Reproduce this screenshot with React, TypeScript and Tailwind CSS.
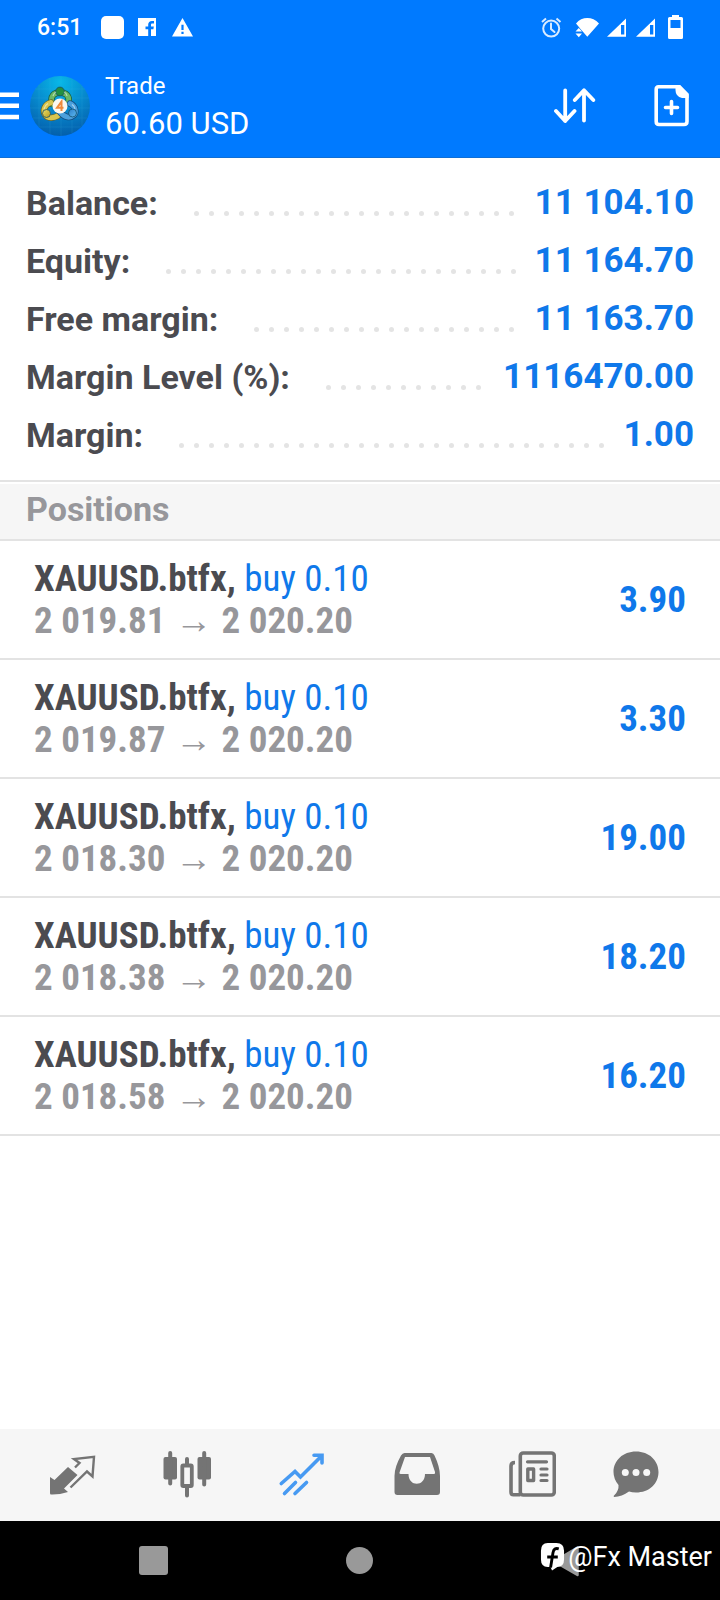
import type { ReactNode } from "react";

type Summary = { label: string; value: string };
type Position = { id: number; symbol: string; volume: string; open: string; current: string; profit: string };

const summary: Summary[] = [
  { label: "Balance:", value: "11 104.10" },
  { label: "Equity:", value: "11 164.70" },
  { label: "Free margin:", value: "11 163.70" },
  { label: "Margin Level (%):", value: "1116470.00" },
  { label: "Margin:", value: "1.00" },
];

const positions: Position[] = [
  { id: 1, symbol: "XAUUSD.btfx,", volume: "buy 0.10", open: "2 019.81", current: "2 020.20", profit: "3.90" },
  { id: 2, symbol: "XAUUSD.btfx,", volume: "buy 0.10", open: "2 019.87", current: "2 020.20", profit: "3.30" },
  { id: 3, symbol: "XAUUSD.btfx,", volume: "buy 0.10", open: "2 018.30", current: "2 020.20", profit: "19.00" },
  { id: 4, symbol: "XAUUSD.btfx,", volume: "buy 0.10", open: "2 018.38", current: "2 020.20", profit: "18.20" },
  { id: 5, symbol: "XAUUSD.btfx,", volume: "buy 0.10", open: "2 018.58", current: "2 020.20", profit: "16.20" },
];

function StatusBar() {
  return (
    <div className="flex h-[54px] items-center justify-between pl-[37px] pr-[36px]">
      <div className="flex items-center">
        <span className="w-16 pt-px text-[23px] font-medium leading-6">6:51</span>
        <span className="h-[23px] w-[23px] rounded-[5px] bg-white" />
        <svg className="ml-[14px] h-[18px] w-[18px]" viewBox="0 0 18 18" aria-hidden="true">
          <path fillRule="evenodd" fill="#fff" d="M0 0H18V18H13V11.3H15.4L15.8 8.6H13V7C13 6.1 13.4 5.6 14.4 5.6H16V3.1C15.5 3 14.8 2.9 14 2.9C11.600 2.900 10.200 4.300 10.200 6.600V8.600H7.500V11.300H10.200V18H0Z" />
        </svg>
        <svg className="ml-4 h-[19px] w-[21px]" viewBox="0 0 21 19" aria-hidden="true">
          <path fillRule="evenodd" fill="#fff" d="M10.500 0L21 18.500H0ZM9.400 6.700V12H11.600V6.700ZM9.400 13.800V16.100H11.600V13.800Z" />
        </svg>
      </div>
      <svg className="h-[26px] w-[144px]" viewBox="540 13 144 26" fill="#fff" aria-hidden="true">
        <g fill="none" stroke="#fff" strokeWidth="2" opacity="0.85">
          <circle cx="551.200" cy="27.600" r="8" />
          <path d="M551 22.500V28L554.500 31" strokeLinecap="round" />
          <path d="M542 21L546 17.500M556.500 17.500L560.500 21" />
        </g>
        <path d="M576 22.500C582 15.200 592.500 15.200 599 22.500L587.300 35.800L580.500 28L578.500 25.500Z" />
        <path d="M575.500 30.500L578.800 27L582 30.500ZM575.500 32.500H582L578.800 36.300Z" />
        <path fillRule="evenodd" d="M607 35.700L626 17.500V35.700ZM621 24V33.500H624.300V24Z" />
        <path fillRule="evenodd" d="M636 35.700L655 17.500V35.700ZM650 24V33.500H653.300V24Z" />
        <path fillRule="evenodd" d="M672 14H679V16H681.500Q683 16 683 17.500V36.500Q683 38 681.500 38H669.500Q668 38 668 36.500V17.500Q668 16 669.500 16H672ZM670.500 19V27H680.500V19Z" />
      </svg>
    </div>
  );
}

function AppLogo() {
  return (
    <svg className="h-[60px] w-[60px]" viewBox="0 0 60 60" aria-hidden="true">
      <defs>
        <radialGradient id="bg" cx="0.5" cy="0.1" r="0.95">
          <stop offset="0" stopColor="#08b8e8" />
          <stop offset="0.5" stopColor="#0788cc" />
          <stop offset="1" stopColor="#035aa8" />
        </radialGradient>
        <linearGradient id="green" x2="0" y2="1">
          <stop offset="0" stopColor="#2d9440" />
          <stop offset="1" stopColor="#8cc97a" />
        </linearGradient>
        <linearGradient id="yellow" x2="1" y2="1">
          <stop offset="0" stopColor="#e9df6a" />
          <stop offset="1" stopColor="#b99a1c" />
        </linearGradient>
        <linearGradient id="blue" x2="1" y2="1">
          <stop offset="0" stopColor="#2b7fca" />
          <stop offset="1" stopColor="#5eb8f0" />
        </linearGradient>
      </defs>
      <circle cx="30" cy="30" r="30" fill="url(#bg)" />
      <path d="M9 9V51M20 2V58M31 0V60M42 3V57M52 10V50M5 13H55M1 22H59M0 32H60M3 42H57M9 51H51" stroke="#45b8e4" strokeWidth="0.600" opacity="0.250" />
      <g fill="none" strokeLinecap="round">
        <path d="M22 28C20 20 24 16.500 30 16.500S40 20 38.500 27" stroke="#175c3a" strokeWidth="6.400" />
        <path d="M22 28C20 20 24 16.500 30 16.500S40 20 38.500 27" stroke="#6cb865" strokeWidth="5" />
        <path d="M21 26.500C15 28 12.500 34 15 38.500C18 43 24 42 27.500 40" stroke="#6d6420" strokeWidth="6.400" />
        <path d="M21 26.500C15 28 12.500 34 15 38.500C18 43 24 42 27.500 40" stroke="#d8c650" strokeWidth="5" />
        <path d="M40 27.500C45.500 30 46.500 36 44 39C39.500 43 34 41 30 36" stroke="#124c82" strokeWidth="6.400" />
        <path d="M40 27.500C45.500 30 46.500 36 44 39C39.500 43 34 41 30 36" stroke="#4ba0dc" strokeWidth="5" />
      </g>
      <g stroke="#15506a" strokeWidth="0.800">
        <circle cx="30" cy="15.500" r="4.400" fill="#249040" />
        <circle cx="16.500" cy="37.500" r="4" fill="url(#yellow)" />
        <circle cx="42.500" cy="37" r="4" fill="url(#blue)" />
      </g>
      <path d="M23 20Q24 17 26 16M34 16Q36.500 17 37 20M14 33Q15 29 18 27.500M45 33Q44.500 30 42 28.500" stroke="#fff" strokeWidth="1.200" fill="none" opacity="0.500" />
      <circle cx="30" cy="30" r="7.500" fill="#fbf8f0" />
      <path d="M31.500 35V25.500L27 31.800H33.500" fill="none" stroke="#f08a3c" strokeWidth="2" />
    </svg>
  );
}

function Header() {
  return (
    <header className="bg-[#007aff] text-white">
      <StatusBar />
      <div className="flex h-[103px] items-center pr-[28px]">
        <button aria-label="Open menu" className="w-[19px]">
          <svg className="mt-px h-[28px] w-[19px]" viewBox="0 0 19 28" fill="#fff" aria-hidden="true">
            <path d="M0 0.500H19V5H0ZM0 11.500H19V16H0ZM0 22.800H19V27.300H0Z" />
          </svg>
        </button>
        <span className="ml-[11px]"><AppLogo /></span>
        <div className="ml-[15px] flex-1">
          <h1 className="text-[24px] leading-[36px]">Trade</h1>
          <p className="text-[31px] leading-[40px]">60.60 USD</p>
        </div>
        <button aria-label="Sort positions">
          <svg className="h-[36px] w-[44px]" viewBox="552 88 44 36" fill="none" stroke="#fff" strokeWidth="3.800" strokeLinecap="round" strokeLinejoin="round" aria-hidden="true">
            <path d="M565.200 90.500V121M556 111L565.200 121L574.500 111M584 120.500V90.500M574.800 100L584 90.200L593.300 100" />
          </svg>
        </button>
        <button aria-label="New order" className="ml-[56px]">
          <svg className="h-[44px] w-[40px]" viewBox="652 84 40 44" fill="none" aria-hidden="true">
            <path d="M658.500 86.700H679.500L687 94.500V121.500Q687 124.500 684 124.500H659Q656.200 124.500 656.200 121.500V89.500Q656.200 86.700 658.500 86.700Z" stroke="#fff" strokeWidth="3.600" />
            <path d="M675.500 86H680L688.500 94.500V98H682Q675.500 96.500 675.500 90Z" fill="#fff" />
            <path d="M671.500 101.500V113.500M665.500 107.500H677.500" stroke="#fff" strokeWidth="3.600" strokeLinecap="round" />
          </svg>
        </button>
      </div>
      <div className="h-px bg-[#0f6fd6]" />
    </header>
  );
}

function Leader() {
  return (
    <span aria-hidden="true" className="ml-[31px] mr-[8px] mt-[20px] flex h-[5px] flex-1 flex-wrap overflow-hidden">
      {Array.from({ length: 48 }, (_, i) => (
        <span key={i} className="flex h-[6px] w-[15px] justify-center">
          <span className="h-[5px] w-[5px] rounded-full bg-[#e4e4e4]" />
        </span>
      ))}
    </span>
  );
}

function TabButton({ label, className, children }: { label: string; className: string; children: ReactNode }) {
  return (
    <button aria-label={label} className={`flex items-center justify-center ${className}`}>
      {children}
    </button>
  );
}

function TabBar() {
  return (
    <nav className="flex h-[92px] bg-[#f6f6f6] pl-[14px] pr-[38px] text-[#747474]">
      <TabButton label="Quotes" className="flex-[115]">
        <svg className="h-12 w-12" viewBox="48 1451 48 48" aria-hidden="true">
          <path d="M50 1477L54.500 1480L68 1467L77.500 1475L64 1488.500L68 1492Q59 1494.800 51 1494.500Q50 1494.500 50 1493Z" fill="currentColor" />
          <path d="M70.500 1487.500L87 1471.500L92.500 1476.500L94 1456.800L74 1459L79.500 1463L75 1467.500" fill="none" stroke="currentColor" strokeWidth="2.400" />
        </svg>
      </TabButton>
      <TabButton label="Charts" className="flex-[115]">
        <svg className="h-12 w-12" viewBox="163.500 1451 48 48" fill="currentColor" aria-hidden="true">
          <rect x="164" y="1457" width="13.500" height="22.500" rx="2" />
          <rect x="198" y="1457" width="13.500" height="22.500" rx="2" />
          <path d="M170.700 1453V1483.500M204.700 1453V1484.500M187.500 1459V1465M187.500 1488V1495.500" stroke="currentColor" strokeWidth="4" strokeLinecap="round" />
          <rect x="182.800" y="1465.500" width="9.500" height="20.500" rx="1" fill="none" stroke="currentColor" strokeWidth="3.800" />
        </svg>
      </TabButton>
      <TabButton label="Trade" className="flex-[115] text-[#479af2]">
        <svg className="h-12 w-12" viewBox="278.500 1451 48 48" fill="none" stroke="currentColor" strokeWidth="3.600" strokeLinecap="round" aria-hidden="true">
          <path d="M281.800 1483.500L295.500 1471.500L301 1477L322 1456M314.500 1455.200H322.500V1463M285 1493.500L296 1482.500M295.500 1493.500L307 1482.500" />
        </svg>
      </TabButton>
      <TabButton label="History" className="flex-[115]">
        <svg className="h-12 w-12" viewBox="393.500 1451 48 48" aria-hidden="true">
          <path fillRule="evenodd" fill="currentColor" d="M405 1453H432Q434 1453 435 1455.500Q440.500 1467 440.500 1476V1492Q440.500 1495 437.500 1495H398Q395 1495 395 1492V1476Q395 1467 401.500 1455.500Q403 1453 405 1453ZM405.500 1457L400 1472.500Q399.500 1474 401.500 1474H409C409 1487 425.500 1487 425.500 1474H434.500Q436 1474 435.500 1472L430.500 1457Z" />
        </svg>
      </TabButton>
      <TabButton label="News" className="flex-[115]">
        <svg className="h-12 w-12" viewBox="508.500 1451 48 48" fill="none" stroke="currentColor" aria-hidden="true">
          <rect x="520.800" y="1453" width="34" height="42" rx="3" strokeWidth="3.600" />
          <path d="M521 1494.800H514Q511.500 1494.800 511.500 1492V1466Q511.500 1462.500 515.500 1462.500" strokeWidth="3.600" />
          <path d="M528 1461.800H547M541.500 1469H547.500M541.500 1475H547.500M541.500 1480.500H547.500" strokeWidth="3.200" strokeLinecap="round" />
          <rect x="528.300" y="1469" width="5.800" height="11.500" strokeWidth="3.400" strokeLinejoin="round" />
        </svg>
      </TabButton>
      <TabButton label="Messages" className="flex-[92]">
        <svg className="h-12 w-12" viewBox="612 1451 48 48" aria-hidden="true">
          <path fill="currentColor" d="M636 1451.500C649 1451.500 658.500 1460.500 658.500 1472C658.500 1484 649 1492.500 636 1492.500Q632 1492.500 629 1491.500Q622 1496.500 614 1497Q613 1496 614.500 1495Q619 1490.500 618.500 1485Q613.500 1479 613.500 1472C613.500 1460.500 623 1451.500 636 1451.500Z" />
          <g fill="#f6f6f6">
            <circle cx="625.300" cy="1472.500" r="3.500" />
            <circle cx="636" cy="1472.500" r="3.500" />
            <circle cx="646.700" cy="1472.500" r="3.500" />
          </g>
        </svg>
      </TabButton>
    </nav>
  );
}

function SystemBar() {
  return (
    <div className="relative grid h-[79px] grid-cols-3 items-center justify-items-center bg-black px-[50px]">
      <button aria-label="Recent apps" className="h-[29px] w-[29px] rounded-[3px] bg-[#999]" />
      <button aria-label="Home" className="h-[27px] w-[27px] rounded-full bg-[#999]" />
      <button aria-label="Back">
        <svg className="h-8 w-8" viewBox="551 1544 32 32" aria-hidden="true">
          <path d="M577.500 1546.500V1574L554 1560.500Z" fill="#999" stroke="#999" strokeWidth="2.500" strokeLinejoin="round" />
        </svg>
      </button>
      <div className="absolute right-2 top-[20px] flex items-center text-white">
        <svg className="h-[28px] w-[25px]" viewBox="0 0 26 29" aria-hidden="true">
          <path fill="#fff" d="M8 0H17Q25 0 25 8V17Q25 24.500 18 25L12.500 28.500L11 25H8Q1 24.500 1 17V8Q1 0 8 0Z" />
          <path d="M19.500 6Q14.500 4.500 13.500 10L11 25.500M7.500 14.500H18.500" fill="none" stroke="#000" strokeWidth="3" />
        </svg>
        <span className="ml-[3px] text-[27px] leading-8">@Fx Master</span>
      </div>
    </div>
  );
}

export default function App() {
  return (
    <div className="flex min-h-screen flex-col bg-white font-['Roboto',sans-serif]">
      <Header />
      <main className="flex-1">
        <dl className="border-b-2 border-[#e3e3e3] px-[26px] pb-[16px] pt-[16px] text-[34px] font-bold leading-[58px]">
          {summary.map((row) => (
            <div key={row.label} className="flex items-center">
              <dt className="text-[#4b4b50]">{row.label}</dt>
              <Leader />
              <dd className="text-[35px] text-[#0f78ea]">{row.value}</dd>
            </div>
          ))}
        </dl>
        <h2 className="mt-[2px] border-b-2 border-[#e3e3e3] bg-[#f6f6f6] px-[26px] pb-[4px] text-[34px] font-bold leading-[51px] text-[#97979b]">Positions</h2>
        <ul className="font-['Roboto_Condensed','Liberation_Sans_Narrow',sans-serif] text-[37px] font-bold leading-[42px]">
          {positions.map((p) => (
            <li key={p.id} className="flex h-[119px] items-center justify-between border-b-2 border-[#e3e3e3] pl-[34px] pr-[34px]">
              <div>
                <p className="text-[#4b4b50]">
                  {p.symbol} <span className="font-normal text-[#0f78ea]">{p.volume}</span>
                </p>
                <p className="flex items-baseline text-[#97979b]">
                  {p.open}
                  <span className="w-[56px] text-center text-[37px] font-normal">→</span>
                  {p.current}
                </p>
              </div>
              <span className="text-[#0f78ea]">{p.profit}</span>
            </li>
          ))}
        </ul>
      </main>
      <TabBar />
      <SystemBar />
    </div>
  );
}
